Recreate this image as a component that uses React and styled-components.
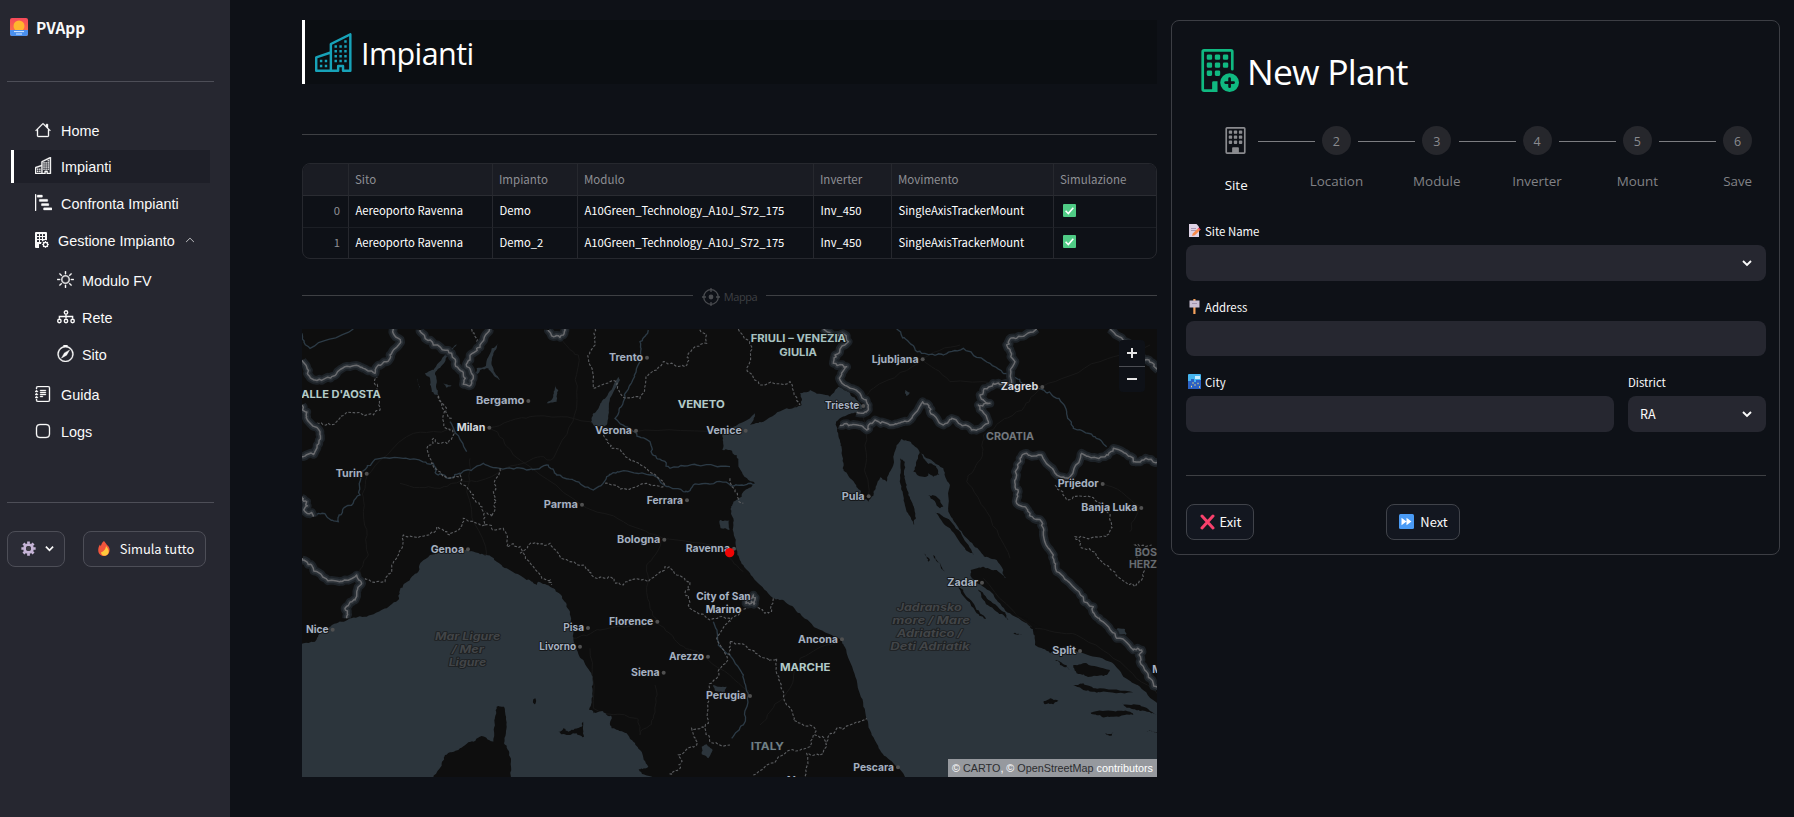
import React from "react";
import styled, { createGlobalStyle } from "styled-components";
import {
  BsHouse, BsBuildings, BsBarChartSteps, BsBuildingFillGear, BsSun, BsCompass,
  BsJournalText, BsApp, BsBuildingAdd, BsBuilding, BsChevronUp,
} from "react-icons/bs";

const source = `"Noto Sans CJK SC", "Noto Sans", sans-serif`;
const segoe = `"Open Sans", "Noto Sans", sans-serif`;

const GlobalStyle = createGlobalStyle`
  * { box-sizing: border-box; }
  body { margin: 0; background: #0e1117; color: #fafafa; font-family: ${source}; overflow: hidden; }
  svg { display: block; flex: none; }
`;

const Page = styled.div`
  display: flex;
  width: 1794px;
  height: 817px;
`;

/* ---------- sidebar ---------- */
const Sidebar = styled.aside`
  display: flex;
  flex-direction: column;
  width: 230px;
  height: 100%;
  padding: 0 16px 0 7px;
  background: #262730;
`;
const Brand = styled.div`
  display: flex;
  align-items: center;
  gap: 8px;
  height: 54px;
  padding: 0 0 1px 3px;
  font-size: 15.4px;
  font-weight: 600;
  line-height: 20px;
`;
const Rule = styled.hr`
  width: 100%;
  height: 1px;
  margin: ${(p) => p.$m || 0};
  border: 0;
  background: ${(p) => p.$color || "#3e4044"};
`;
const Nav = styled.nav`
  display: flex;
  flex-direction: column;
  padding: 32px 4px 0;
  height: 420px;
`;
const NavItem = styled.a`
  display: flex;
  align-items: center;
  gap: ${(p) => p.$gap || 10}px;
  height: ${(p) => (p.$active ? 33 : 37)}px;
  margin: ${(p) => p.$m || 0};
  padding-left: ${(p) => p.$indent || 21}px;
  border-left: 3px solid ${(p) => (p.$active ? "#fff" : "transparent")};
  background: ${(p) => (p.$active ? "#1e1f28" : "transparent")};
  color: #fafafa;
  font: 14.4px/20px "Liberation Sans", Arial, sans-serif;
  svg { stroke: currentColor; stroke-width: ${(p) => (p.$fine ? 0 : 0.35)}; margin-bottom: 2px; }
`;
const Caret = styled(BsChevronUp)`
  margin-left: 1px;
`;
const SideActions = styled.div`
  display: flex;
  gap: 18px;
`;
const Button = styled.button`
  display: flex;
  align-items: center;
  justify-content: center;
  gap: ${(p) => p.$gap || 6}px;
  width: ${(p) => p.$w}px;
  height: 36px;
  padding: 0 0 1px ${(p) => (p.$side ? 3 : 1)}px;
  border: 1px solid ${(p) => (p.$side ? "#4d4e57" : "#40434a")};
  border-radius: 8px;
  background: ${(p) => (p.$side ? "#2b2c36" : "#131720")};
  color: #fafafa;
  font: 400 12.900px/20px ${source};
`;

/* ---------- centre column ---------- */
const Main = styled.main`
  width: 855px;
  margin-left: 72px;
  padding-top: 20px;
`;
const TitleBar = styled.header`
  display: flex;
  align-items: center;
  gap: 7px;
  height: 64px;
  padding-left: 10px;
  border-left: 3px solid #fff;
  background: #0b0e12;
`;
const Title = styled.h1`
  margin: 0;
  padding-top: ${(p) => p.$drop}px;
  color: #fff;
  font: 400 ${(p) => p.$size}px/48px ${segoe};
  letter-spacing: ${(p) => p.$track}px;
`;
const Table = styled.div`
  display: grid;
  grid-template-columns: 46px 144px 85px 236px 78px 162px 1fr;
  height: 96px;
  grid-template-rows: 32px 32px 30px;
  border: 1px solid #26282e;
  border-radius: 8px;
  overflow: hidden;
`;
const Cell = styled.div`
  display: flex;
  align-items: center;
  justify-content: ${(p) => (p.$index ? "flex-end" : "flex-start")};
  padding: 0 ${(p) => (p.$index ? 8 : 0)}px ${(p) => (p.$head ? 2 : 3)}px ${(p) => (p.$head ? 6 : 6.5)}px;
  border-right: ${(p) => (p.$last ? 0 : 1)}px solid #26282e;
  border-bottom: ${(p) => (p.$bottom ? 0 : 1)}px solid ${(p) => (p.$head ? "#2a2c32" : "#1c1f25")};
  background: ${(p) => (p.$head ? "#1a1c23" : "transparent")};
  color: ${(p) => (p.$head || p.$index ? "#8e8f94" : "#fff")};
  font-size: ${(p) => (p.$head ? 11.5 : 11.25)}px;
  line-height: 18px;
  white-space: nowrap;
`;
const MapDivider = styled.div`
  display: flex;
  align-items: center;
  height: 20px;
  margin: 27px 0 23px;
  color: #3e4044;
  font: 400 11px/18px ${segoe};
  letter-spacing: -0.45px;
`;
const DividerLine = styled.span`
  flex: 1;
  height: 1px;
  margin-bottom: 1px;
  background: #3e4044;
`;
const DividerLabel = styled.span`
  display: flex;
  align-items: center;
  gap: 4px;
  padding: 2px 9px 0 9px;
`;
const MapFrame = styled.div`
  position: relative;
  width: 855px;
  height: 448px;
  background: #0e0e0e;
  overflow: hidden;
`;
const ZoomControls = styled.div`
  position: absolute;
  top: 11px;
  right: 12px;
  width: 26px;
  border-radius: 4px;
  background: #0e1117;
  overflow: hidden;
`;
const ZoomButton = styled.div`
  display: grid;
  place-items: center;
  height: 26px;
  & + & { border-top: 1px solid #4b4d53; }
`;
const Attribution = styled.div`
  position: absolute;
  right: 0;
  bottom: 0;
  width: 209px;
  height: 18px;
  padding-left: 4px;
  background: #96999e;
  color: #fff;
  font: 10.8px/18px "Liberation Sans", Arial, sans-serif;
  white-space: nowrap;
`;
const Credit = styled.span`
  color: #2c2d30;
`;

/* ---------- form panel ---------- */
const Panel = styled.section`
  width: 609px;
  height: 535px;
  margin: 20px 0 0 14px;
  padding: 0 13px 0 14px;
  border: 1px solid #3c3e44;
  border-radius: 8px;
`;
const PanelTitle = styled.header`
  display: flex;
  align-items: center;
  gap: 8px;
  height: 98px;
  padding: 0 0 0 10px;
`;
const Stepper = styled.div`
  display: grid;
  grid-template-columns: repeat(6, 100.3px);
  width: 602px;
  height: 102px;
  overflow: hidden;
`;
const Step = styled.div`
  position: relative;
  display: flex;
  flex-direction: column;
  align-items: center;
  padding-top: 7px;
  color: ${(p) => (p.$active ? "#fafafa" : "#818286")};
  font: 400 13.4px/20px ${segoe};
  &:not(:last-child)::after {
    content: "";
    position: absolute;
    left: 72px;
    top: 22px;
    width: 57px;
    height: 1px;
    background: #7c7d81;
  }
`;
const StepMark = styled.div`
  display: grid;
  place-items: center;
  width: 29px;
  height: 29px;
  margin-bottom: ${(p) => (p.$active ? 20 : 16)}px;
  padding: ${(p) => (p.$active ? "0 2px 0 0" : "3px 0 0")};
  border-radius: 50%;
  background: ${(p) => (p.$active ? "transparent" : "#26272c")};
  color: #8a8b8f;
  font-size: 12.5px;
`;
const Label = styled.div`
  display: flex;
  align-items: center;
  gap: 4px;
  height: 20px;
  padding: 0 0 1px ${(p) => (p.$bare ? 0 : 2)}px;
  margin-bottom: 4px;
  font-size: 11.400px;
  line-height: 20px;
`;
const Box = styled.div`
  display: flex;
  align-items: center;
  justify-content: space-between;
  height: ${(p) => p.$h || 36}px;
  padding: 0 14px 1px 12px;
  border-radius: 8px;
  background: #262730;
  font-size: 12.600px;
`;
const Field = styled.div`
  margin-bottom: ${(p) => p.$gap || 0}px;
`;
const CityRow = styled.div`
  display: grid;
  grid-template-columns: 428px 138px;
  gap: 14px;
`;
const FormActions = styled.div`
  display: grid;
  grid-template-columns: 200px 1fr;
`;

/* ---------- small drawings ---------- */
const Chevron = ({ size = 10 }) => (
  <svg width={size} height={size} viewBox="0 0 10 10" fill="none" stroke="#fafafa" strokeWidth="1.9">
    <path d="M1 3l4 4 4-4" />
  </svg>
);
const Sunrise = () => (
  <svg width="18" height="18" viewBox="0 0 18 18">
    <defs><linearGradient id="sky" x2="0" y2="1"><stop stopColor="#f5495a" /><stop offset="1" stopColor="#ff7d45" /></linearGradient></defs>
    <rect width="18" height="18" rx="2" fill="url(#sky)" />
    <circle cx="9" cy="8" r="5.5" fill="#ffb62e" />
    <path d="M0 12h18v4a2 2 0 0 1-2 2H2a2 2 0 0 1-2-2z" fill="#4a90ee" />
    <path d="M4 13.6h10M6 16h6" stroke="#d8eaff" strokeWidth="1" />
  </svg>
);
const Network = () => (
  <svg width="18" height="14" viewBox="0 0 18 14" fill="none">
    <g strokeWidth="1.4">
      <circle cx="9" cy="2.4" r="1.7" /><path d="M9 4.2v4.4M2.400 8.800V6.500h13.200v2.300" />
      <circle cx="2.4" cy="11" r="1.7" /><circle cx="9" cy="11" r="1.7" /><circle cx="15.6" cy="11" r="1.7" />
    </g>
  </svg>
);
const Gear = () => (
  <svg width="15" height="15" viewBox="-8 -8 16 16" stroke="#c7b5d8">
    <circle r="4.2" fill="none" strokeWidth="3" />
    <path d="M0-7.6V-5M0 7.6V5M-7.6 0H-5M7.6 0H5M-5.4-5.4l1.9 1.9M5.4 5.4L3.5 3.5M-5.4 5.4l1.9-1.9M5.4-5.4L3.5-3.5" strokeWidth="2.9" />
    <circle r="2.6" fill="#403d46" stroke="none" />
  </svg>
);
const Flame = () => (
  <svg width="12" height="15" viewBox="0 0 12 15">
    <path d="M6 0c2 2.2 2 3.2 3.6 4.6C11.500 6.400 12 8 11.400 10.500 10.700 13.300 8.700 15 6 15S.6 13 .3 10.200C0 8 .6 5.500 2 3.600l.8 1.600C3.400 3 4.200 1.400 6 0z" fill="#f2553c" />
    <path d="M8 5c1.200 1.600 3 3.500 2.700 6-.3 2.300-2 3.800-4.300 3.800-2 0-3.400-1.500-3.300-3.500C4.500 11 7.600 9 8 5z" fill="#ffc93c" />
  </svg>
);
const Check = () => (
  <svg width="13" height="13" viewBox="0 0 13 13">
    <rect width="13" height="13" rx="1" fill="#4fcb85" />
    <path d="M2.600 6.800l2.700 2.700 5-5.800" fill="none" stroke="#fff" strokeWidth="1.600" />
  </svg>
);
const Target = () => (
  <svg width="18" height="18" viewBox="0 0 18 18" fill="none" stroke="#4a4c50" strokeWidth="1.300">
    <circle cx="9" cy="9" r="7.300" /><circle cx="9" cy="9" r="2.400" fill="#4a4c50" stroke="none" />
    <path d="M9 0v4M9 14v4M0 9h4M14 9h4" />
  </svg>
);
const Memo = () => (
  <svg width="13" height="13" viewBox="0 0 13 13">
    <path d="M1 0h7.500L11 2.800V13H1z" fill="#dfd3e6" /><path d="M3 4.500h5M3 6.500h5" stroke="#a99ab5" />
    <path d="M4 12l.8-2.600 5-5 2 2-5 4.800z" fill="#f98b4b" /><path d="M9.800 4.400l1-1 2 2-1 1z" fill="#ef4565" />
  </svg>
);
const Signpost = () => (
  <svg width="13" height="15" viewBox="0 0 13 15">
    <path d="M5.300 0h2.200v15H5.300z" fill="#f5a25d" /><path d="M1.500 1.500h10v7h-10z" fill="#c9bfd3" /><path d="M4 4.500h5" stroke="#a193ad" />
  </svg>
);
const Cityscape = () => (
  <svg width="13" height="15" viewBox="0 0 13 15">
    <rect width="13" height="15" rx="1" fill="#45b4ee" /><path d="M7 2h5v3H7z" fill="#c6ecff" />
    <path d="M0 7h3V5h3v3h2V6h5v9H0z" fill="#2a61c4" />
    <path d="M4.500 9h1M6.500 11h1M9.500 9.500h1M3 12.500h1M11 13h1" stroke="#f6dc78" strokeWidth="1.500" />
  </svg>
);
const Cross = () => (
  <svg width="15" height="16" viewBox="0 0 15 16" stroke="#f8416c" strokeWidth="3" strokeLinecap="round">
    <path d="M2 2l11 12M13 2L2 14" />
  </svg>
);
const Forward = () => (
  <svg width="15" height="15" viewBox="0 0 15 15">
    <rect width="15" height="15" rx="1.500" fill="#4a9bf5" /><path d="M2.500 3.800L7.500 7.500l-5 3.700zM7.500 3.800l5 3.700-5 3.700z" fill="#fff" />
  </svg>
);

/* ---------- map ---------- */
/* Adds fine, repeatable irregularity to a coarse outline. */
function roughen(coords, amp = 5, closed = false) {
  const n = coords.trim().split(/\s+/).map((p) => p.split(",").map(Number));
  let seed = Math.round(n[0][0] * 7 + n[0][1] * 13) + 1;
  const rnd = () => { seed = (seed * 16807) % 2147483647; return seed / 2147483647 - 0.5; };
  rnd(); rnd();
  let pts = closed ? [...n, n[0]] : n;
  let a = amp;
  for (let pass = 0; pass < 3; pass++) {
    const out = [pts[0]];
    for (let i = 1; i < pts.length; i++) {
      const [x0, y0] = pts[i - 1];
      const [x1, y1] = pts[i];
      const len = Math.hypot(x1 - x0, y1 - y0);
      if (len > 7 && len < 500) out.push([(x0 + x1) / 2 + rnd() * Math.min(a, len / 3) * 2, (y0 + y1) / 2 + rnd() * Math.min(a, len / 3) * 2]);
      out.push([x1, y1]);
    }
    pts = out;
    a *= 0.7;
  }
  return "M" + pts.map(([x, y]) => x.toFixed(1) + " " + y.toFixed(1)).join("L") + (closed ? "Z" : "");
}

const seas = [
  "1267,375 1267,330 1290,310 1365,265 1350,300 1390,290 1460,250 1505,240 1500,205 1530,195 1590,215 1615,185 1650,205 1690,245 1660,265 1620,280 1608,295 1615,330 1625,370 1628,430 1650,460 1680,495 1690,520 1705,530 1720,512 1730,480 1742,455 1760,470 1780,420 1790,360 1805,342 1840,360 1880,400 1930,430 1950,480 1945,560 1970,600 2010,650 2050,690 2090,705 2110,735 2118,760 2090,735 2050,725 2012,735 2015,760 2050,785 2090,825 2130,865 2180,895 2200,910 2205,960 2250,985 2290,965 2350,985 2430,1010 2470,1055 2520,1085 2575,1140 2575,1360 1820,1360 1780,1315 1740,1275 1710,1215 1690,1145 1670,1065 1640,985 1625,945 1550,910 1500,865 1455,830 1420,820 1370,770 1330,720 1312,690 1305,640 1300,580 1294,560 1300,530 1325,515 1330,500 1365,475 1330,450 1315,410 1310,390 1290,375",
  "0,1360 0,960 45,950 60,925 110,895 150,880 200,875 260,850 295,825 300,795 315,775 355,740 365,710 390,690 430,678 500,675 540,688 560,690 590,710 620,730 680,765 710,780 715,770 760,790 790,825 810,860 820,915 825,965 850,1005 878,1055 878,1115 868,1155 880,1165 910,1160 935,1175 935,1210 980,1225 1000,1250 1020,1275 1045,1325 1016,1333 1030,1348 1110,1360",
];
const islands = [
  "395,1362 425,1315 435,1290 480,1270 520,1250 545,1233 580,1250 583,1185 590,1145 612,1145 620,1205 612,1255 630,1295 633,1362",
  "775,1220 790,1210 805,1220 845,1205 850,1190 852,1235 830,1225 800,1230", "699,1128 706,1120 705,1138",
  "1860,380 1880,410 1900,420 1918,450 1900,455 1885,445 1870,455 1840,440 1848,420",
  "1800,400 1815,410 1812,440 1820,490 1835,530 1848,580 1842,600 1820,560 1808,500 1800,450",
  "1885,510 1910,515 1930,545 1920,550", "1905,560 1940,580 1985,630 2020,690 1995,670 1950,610",
  "1870,685 1890,705 1885,710", "1900,690 1920,715 1935,740 1922,725", "1968,770 1990,800 2030,855 2058,882 2030,865 2000,825",
  "2030,790 2060,820 2110,860 2125,885 2090,860 2050,825", "2320,1020 2360,1015 2430,1035 2420,1050 2370,1055 2330,1045",
  "2265,1005 2300,1020 2310,1034 2280,1020", "2320,1083 2350,1075 2400,1090 2500,1102 2400,1102 2350,1095",
  "2372,1163 2440,1158 2490,1160 2500,1170 2440,1175 2400,1170", "2465,1135 2520,1140 2570,1170 2520,1158 2480,1148",
  "2230,1130 2250,1120 2275,1127 2260,1138 2235,1138", "2415,1225 2440,1222 2435,1232", "2540,1218 2575,1220 2575,1226",
  "2200,905 2210,920 2190,908", "2240,915 2200,895 2170,880 2130,862 2160,872",
  "2140,925 2165,930 2145,928",
];
const lakes = [
  "438,85 470,58 445,90 432,115 405,145 408,185 415,210 395,200 390,160 375,145 400,135",
  "575,70 595,55 580,85 575,120 600,165 580,150 565,130 540,135 525,150 530,130 558,122",
  "955,155 960,165 930,220 925,270 920,300 890,305 873,290 880,265 900,240 925,205",
  "765,180 775,195 770,230 740,235 758,220", "430,175 455,182 440,188", "352,160 360,185 355,195",
  "1240,1080 1280,1085 1275,1100 1245,1098", "1205,1265 1220,1258 1238,1275 1225,1300 1205,1288", "1260,585 1288,585 1288,615 1262,610",
  "1815,195 1830,203 1820,213", "2452,910 2475,912 2478,930 2450,925",
];
const frontiers = [
  "6,105 25,150 45,165 95,155 150,125 200,135 225,145 235,120 270,90 300,55 280,10",
  "360,15 400,60 455,85 470,125 490,150 490,178 515,175 520,155 500,125 510,100 540,60 570,10",
  "6,240 20,275 60,320 45,380 6,395", "6,515 20,530 15,560 40,575", "745,15 760,35 790,30 795,12",
  "6,700 40,730 110,768 170,750 185,775 165,825 135,850 140,880",
  "1570,10 1620,30 1645,50 1605,90 1600,115 1640,125 1620,165 1680,205 1705,240 1690,265 1670,262",
  "1620,300 1655,300 1700,315 1725,285 1770,300 1810,290 1845,265 1868,230 1890,260 1930,300 1955,280 2015,315 2065,295 2035,240 2070,235 2040,210 2080,175 2135,175 2145,110 2120,60 2150,40 2210,12",
  "2430,12 2500,60 2535,105 2575,135",
  "2575,412 2530,405 2500,410 2440,370 2415,395 2345,385 2305,460 2280,455 2225,390 2180,385 2160,400 2150,450 2155,500 2150,535 2190,565 2225,590 2230,620 2260,690 2270,740 2330,795 2380,845 2400,885 2450,940 2500,975 2525,975 2520,1010 2545,1050 2575,1090",
  "1340,815 1360,810 1362,838 1338,835 1340,815",
];
const regions = [
  "228,150 230,190 240,255 190,270 140,262 110,290 60,295 30,290", "455,280 415,210 430,270 445,310 460,330 440,355 400,340 385,360 395,415 430,455 480,450 490,480 520,520 550,560 555,600 490,580 480,610 450,630 410,605 385,630 310,630 295,690 275,740 255,770 195,760",
  "600,430 580,500 590,530 575,575 555,560", "555,600 610,610 620,665 660,665 700,725 740,765 755,780", "660,685 700,655 750,655 780,695 850,720 890,760 930,755 970,780 990,765 1045,770 1095,725 1130,750 1170,770 1155,805 1170,850 1230,885 1290,880",
  "885,12 885,60 865,100 880,190 950,170 970,215 1020,220 1045,150 1090,110 1155,125 1165,85 1220,55 1200,12",
  "910,330 935,370 985,400 1040,430 1095,480", "1315,12 1355,65 1340,130 1380,180 1470,170 1500,240", "915,475 970,490 1040,475 1090,480",
  "1290,885 1250,940 1280,1010 1250,1060 1220,1100 1225,1195 1175,1210 1190,1260 1135,1290 1140,1330 1105,1345",
  "1215,1210 1230,1250 1290,1260", "1290,950 1340,965 1400,1000 1430,1000 1440,1070 1460,1140 1480,1185 1540,1205 1545,1230 1580,1250 1570,1285 1520,1285 1515,1355",
  "1540,1230 1530,1265 1460,1280 1400,1320 1360,1350", "1580,1250 1610,1210 1650,1200 1700,1180", "1420,820 1415,855 1395,865 1370,840 1340,850 1290,890",
  "1290,990 1290,950", "2265,480 2300,525 2370,515 2420,560 2435,600 2420,635 2325,635 2340,660 2390,695 2460,760 2505,785 2525,765 2530,715 2510,690 2505,660 2555,660", "515,12 530,50",
  "1290,460 1305,500 1330,535",
];
const rivers = [
  "38,565 80,575 115,590 130,550 180,510 185,450 225,403 330,403 400,415 415,450 450,460 500,435 550,415 600,430 680,435 740,420 770,450 820,465 880,495 920,455 960,440 1060,450 1100,485 1150,500 1180,480 1250,470 1310,480 1365,478",
  "450,290 500,380", "1045,15 1020,50 1020,110 990,180 970,230 945,280 1010,325 1050,350 1070,400 1110,430 1190,420 1290,425",
  "1790,12 1830,55 1870,85 1930,90 1990,70 2070,115 2120,145 2160,170 2230,195 2270,220 2300,260 2320,310 2380,335 2420,365",
  "1240,890 1255,960 1290,990 1330,1050 1345,1110 1330,1200 1295,1240", "6,25 30,70 160,12",
];
const roads = [
  "200,455 340,325 500,305 566,308 690,275 870,290 1005,320 1290,320", "566,308 640,390 845,540 970,590 1090,640 1270,675 1330,740", "200,455 190,560 205,690 180,760",
  "300,475 420,490 530,470 700,400 760,400 830,250 835,90 780,40", "500,690 560,690 500,500 510,400", "1090,640 1040,720 1050,850 1070,890 1140,960 1220,1000 1350,1100",
  "820,940 900,915 1070,890", "870,970 880,1150 1010,1180 1020,1230 1060,1180 1065,1080", "1290,305 1400,300 1500,235 1690,240 1720,190 1865,100 1980,60", "1865,100 1950,170 2225,185 2400,110 2550,60",
  "2225,185 2150,260 2050,330 2035,410 2000,470 2060,560 2130,700", "1690,270 1700,400 1705,510", "1625,945 1500,1000 1450,1120 1380,1200", "2050,760 2200,910 2330,930 2460,1010 2575,1110", "2400,470 2525,545 2490,620",
];
const cities = [
  ["Trento", 927, 108, 102], ["Bergamo", 528, 238, 145], ["Milan", 470, 318, 86, 1], ["Verona", 885, 327, 111], ["Turin", 107, 456, 81], ["Parma", 731, 549, 103],
  ["Ferrara", 1040, 536, 109], ["Bologna", 951, 654, 130], ["Genoa", 392, 683, 100], ["Ravenna", 1157, 681, 133], ["Venice", 1219, 327, 106], ["Ljubljana", 1715, 113, 141],
  ["Zagreb", 2102, 196, 113, 1], ["Trieste", 1575, 253, 103], ["Pula", 1625, 524, 69], ["Prijedor", 2273, 487, 123], ["Banja Luka", 2344, 559, 168], ["Nice", 18, 924, 68],
  ["Pisa", 790, 919, 62], ["Livorno", 718, 975, 110], ["Florence", 927, 900, 133], ["Arezzo", 1107, 1005, 105], ["Siena", 993, 1053, 86], ["Perugia", 1218, 1123, 120],
  ["Ancona", 1494, 953, 120], ["Zadar", 1942, 783, 92], ["Split", 2257, 988, 71], ["Pescara", 1660, 1337, 122],
];
const plain = [
  ["City of San", 1189, 825, 163, "#a9b4c4"], ["Marino", 1217, 863, 107, "#a9b4c4"],
  ["FRIULI – VENEZIA", 1352, 50, 286, "#a9c2c0"], ["GIULIA", 1438, 92, 113, "#a9c2c0"], ["VENETO", 1133, 248, 141, "#b3cbc8"], ["MARCHE", 1440, 1038, 151, "#b3cbc8"],
  ["ALLE D'AOSTA", 4, 219, 238, "#b3cbc8"], ["CROATIA", 2058, 346, 144, "#73787d"], ["ITALY", 1352, 1275, 100, "#6f7f84"], ["BOS", 2504, 692, 67, "#666b70"], ["HERZ", 2487, 730, 84, "#666b70"],
  ["M", 2557, 1045, 28, "#a9b4c4"], ["Nova", 1460, 1376, 92, "#a9b4c4"],
];
const seaNames = [
  ["Mar Ligure", 405, 945, 196], ["/ Mer", 455, 983, 97], ["Ligure", 446, 1023, 113],
  ["Jadransko", 1790, 858, 195], ["more / Mare", 1777, 897, 233], ["Adriatico /", 1790, 935, 197], ["Deti Adriatik", 1771, 974, 238],
];

const MapLabel = styled.text`
  font: ${(p) => (p.$sea ? "italic 700" : "650")} ${(p) => (p.$sea ? 31 : 31.5)}px Inter, "Open Sans", sans-serif;
  fill: ${(p) => p.$fill};
  stroke: ${(p) => (p.$sea ? "#1d2022" : "#101112")};
  stroke-width: 5px;
  stroke-linejoin: round;
  paint-order: stroke;
`;

const PlantMap = () => (
  <svg width="855" height="448" viewBox="6 12 2565 1344">
    <g fill="none" stroke="#181818" strokeWidth="3">{roads.map((d) => <path key={d} d={roughen(d, 8)} />)}</g>
    <g fill="#2c353c">{seas.map((d) => <path key={d} d={roughen(d, 4, true)} />)}{lakes.map((d) => <path key={d} d={roughen(d, 3, true)} />)}</g>
    <g fill="#0e0e0e">{islands.map((d) => <path key={d} d={roughen(d, 4, true)} />)}</g>
    <g fill="none" stroke="#2c3a45" strokeWidth="4">{rivers.map((d) => <path key={d} d={roughen(d, 7)} />)}</g>
    <g fill="none" stroke="#5c5e61" strokeWidth="3.300" strokeDasharray="8 5">{regions.map((d) => <path key={d} d={roughen(d, 8)} />)}</g>
    <g fill="none" strokeLinejoin="round">
      <g stroke="#1c2126" strokeWidth="26">{frontiers.map((d) => <path key={d} d={roughen(d, 8)} />)}</g>
      <g stroke="#2b3137" strokeWidth="15">{frontiers.map((d) => <path key={d} d={roughen(d, 8)} />)}</g>
      <g stroke="#6a6b6e" strokeWidth="4.500">{frontiers.map((d) => <path key={d} d={roughen(d, 8)} />)}</g>
    </g>
    {cities.map(([name, x, y, w, major]) => (
      <g key={name}>
        <circle cx={x + w + 12} cy={y - 10} r="6" fill="#505050" />
        <MapLabel x={x} y={y} textLength={w} lengthAdjust="spacingAndGlyphs" $fill={major ? "#d7dadf" : "#a5b0c0"}>{name}</MapLabel>
      </g>
    ))}
    {plain.map(([name, x, y, w, fill]) => (
      <MapLabel key={name} x={x} y={y} textLength={w} lengthAdjust="spacingAndGlyphs" $fill={fill}>{name}</MapLabel>
    ))}
    {seaNames.map(([name, x, y, w]) => (
      <MapLabel key={name} x={x} y={y} textLength={w} lengthAdjust="spacingAndGlyphs" $sea $fill="#424548">{name}</MapLabel>
    ))}
    <circle cx="1289" cy="683" r="14" fill="#f00505" />
  </svg>
);

const head = ["", "Sito", "Impianto", "Modulo", "Inverter", "Movimento", "Simulazione"];
const rows = [
  ["0", "Aereoporto Ravenna", "Demo", "A10Green_Technology_A10J_S72_175", "Inv_450", "SingleAxisTrackerMount"],
  ["1", "Aereoporto Ravenna", "Demo_2", "A10Green_Technology_A10J_S72_175", "Inv_450", "SingleAxisTrackerMount"],
];
const CheckCell = styled(Cell)`
  padding-left: 9px;
`;
const steps = ["Location", "Module", "Inverter", "Mount", "Save"];

export default function App() {
  return (
    <Page>
      <GlobalStyle />
      <Sidebar>
        <Brand><Sunrise />PVApp</Brand>
        <Rule $m="27px 0 0" $color="#4d4e57" />
        <Nav>
          <NavItem $m="-2px 0 0"><BsHouse size={16} />Home</NavItem>
          <NavItem $active $gap={9} $m="1px 0 2px"><BsBuildings size={17} />Impianti</NavItem>
          <NavItem $gap={9}><BsBarChartSteps size={17} />Confronta Impianti</NavItem>
          <NavItem $indent={19} $gap={9} $fine><BsBuildingFillGear size={16} />Gestione Impianto<Caret size={10} /></NavItem>
          <NavItem $indent={43} $gap={8} $m="3px 0 0"><BsSun size={17} />Modulo FV</NavItem>
          <NavItem $indent={43} $gap={7}><Network />Rete</NavItem>
          <NavItem $indent={43} $gap={8}><BsCompass size={17} />Sito</NavItem>
          <NavItem $m="3px 0 0"><BsJournalText size={16} />Guida</NavItem>
          <NavItem><BsApp size={16} />Logs</NavItem>
        </Nav>
        <Rule $m="0 0 28px" $color="#4d4e57" />
        <SideActions>
          <Button $side $w={58} $gap={9}><Gear /><Chevron size={9} /></Button>
          <Button $side $w={123} $gap={10}><Flame />Simula tutto</Button>
        </SideActions>
      </Sidebar>

      <Main>
        <TitleBar>
          <BsBuildings size={39} color="#17a2b8" />
          <Title $size={30.5} $track={-0.6} $drop={2}>Impianti</Title>
        </TitleBar>
        <Rule $m="50px 0 28px" />
        <Table>
          {head.map((h, i) => <Cell key={i} $head $last={i === 6}>{h}</Cell>)}
          {rows.map((r, ri) => (
            <React.Fragment key={ri}>
              {r.map((c, i) => <Cell key={i} $index={i === 0} $bottom={ri === 1}>{c}</Cell>)}
              <CheckCell $last $bottom={ri === 1}><Check /></CheckCell>
            </React.Fragment>
          ))}
        </Table>
        <MapDivider>
          <DividerLine />
          <DividerLabel><Target />Mappa</DividerLabel>
          <DividerLine />
        </MapDivider>
        <MapFrame>
          <PlantMap />
          <ZoomControls>
            <ZoomButton><svg width="12" height="12" viewBox="0 0 12 12" stroke="#e4e4e4" strokeWidth="2"><path d="M1 6h10M6 1v10" /></svg></ZoomButton>
            <ZoomButton><svg width="12" height="12" viewBox="0 0 12 12" stroke="#e4e4e4" strokeWidth="2"><path d="M1 5h10" /></svg></ZoomButton>
          </ZoomControls>
          <Attribution>© <Credit>CARTO</Credit>, © <Credit>OpenStreetMap</Credit> contributors</Attribution>
        </MapFrame>
      </Main>

      <Panel>
        <PanelTitle>
          <BsBuildingAdd size={43} color="#10b981" />
          <Title $size={35.5} $track={-0.8} $drop={2}>New Plant</Title>
        </PanelTitle>
        <Stepper>
          <Step $active><StepMark $active><BsBuilding size={27} /></StepMark>Site</Step>
          {steps.map((s, i) => <Step key={s}><StepMark>{i + 2}</StepMark>{s}</Step>)}
        </Stepper>
        <Field $gap={16}>
          <Label><Memo />Site Name</Label>
          <Box><span /><Chevron /></Box>
        </Field>
        <Field $gap={16}>
          <Label><Signpost />Address</Label>
          <Box $h={35} />
        </Field>
        <CityRow>
          <Field><Label><Cityscape />City</Label><Box /></Field>
          <Field><Label $bare>District</Label><Box>RA<Chevron /></Box></Field>
        </CityRow>
        <Rule $m="43px 0 28px" />
        <FormActions>
          <Button $w={68} $gap={5}><Cross />Exit</Button>
          <Button $w={74} $gap={6}><Forward />Next</Button>
        </FormActions>
      </Panel>
    </Page>
  );
}
